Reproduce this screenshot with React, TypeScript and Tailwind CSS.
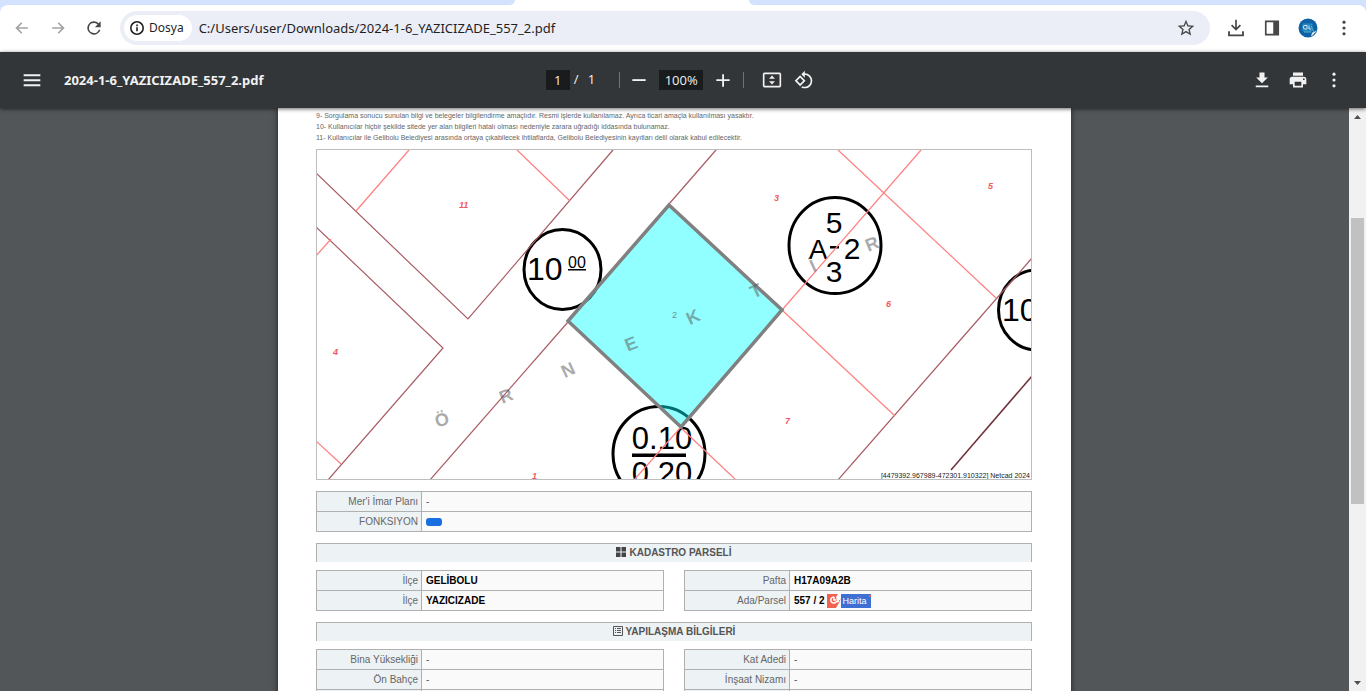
import React from "react";

const red = "#ff8080";
const maroon = "#a85c62";

const redLines = [
  "M409 150 356 211",
  "M517 150 570 201",
  "M331 239 316 256",
  "M316 441 341 464",
  "M838 150 996 298",
  "M921 150 782 310",
  "M782 310 895 416",
  "M681 428 736 480",
  "M681 427 634 480",
];

const maroonLines = [
  "M316 173 468 319 613 150",
  "M316 227 443 348 328 480",
  "M568 322 430 480",
  "M669 204 716 150",
  "M1032 258 838 480",
];

const parcels: [string, number, number][] = [
  ["11", 459, 208],
  ["3", 774, 201],
  ["5", 988, 189],
  ["6", 886, 307],
  ["7", 785, 424],
  ["4", 333, 355],
  ["1", 532, 479],
];

const watermark: [string, number, number, number][] = [
  ["Ö", 442, 420, -15],
  ["R", 506, 396, -22],
  ["N", 568, 370, -25],
  ["E", 631, 344, -22],
  ["K", 693, 317, -25],
  ["T", 756, 291, -25],
  ["İ", 813, 266, -25],
  ["R", 872, 244, -22],
];

function MapView() {
  return (
    <svg
      className="block w-full"
      viewBox="316 149 716 331"
      fontFamily="'Liberation Sans', Arial, sans-serif"
      role="img"
      aria-label="Parsel haritası"
    >
      <rect x="316" y="149" width="716" height="331" fill="#fff" />
      <g fill="none" stroke="#000" strokeWidth="3">
        <ellipse cx="562.500" cy="269.500" rx="38.500" ry="40" />
        <ellipse cx="835" cy="245.500" rx="46" ry="48" />
        <ellipse cx="659" cy="454" rx="46" ry="47.500" />
        <ellipse cx="1037" cy="310" rx="38.500" ry="40" />
      </g>
      <g fill="#000">
        <text x="527" y="280" fontSize="32">10</text>
        <text x="568" y="268" fontSize="16">00</text>
        <rect x="568" y="269" width="18" height="1.500" />
        <g textAnchor="middle" fontSize="30">
          <text x="834" y="233">5</text>
          <text x="818" y="259" fontSize="28">A</text>
          <text x="852" y="259">2</text>
          <text x="834" y="282">3</text>
        </g>
        <rect x="830" y="246" width="9" height="2.500" />
        <text x="662" y="449" fontSize="31" textAnchor="middle">0.10</text>
        <rect x="632" y="453.500" width="54" height="3.500" />
        <text x="662" y="484" fontSize="31" textAnchor="middle">0.20</text>
        <text x="1002" y="321" fontSize="32">10</text>
      </g>
      <path d="M669 205 782 310 681 427 568 321Z" fill="#00ffff" fillOpacity="0.43" />
      <g fill="none" strokeWidth="1.200">
        {maroonLines.map((d) => <path key={d} d={d} stroke={maroon} />)}
        {redLines.map((d) => <path key={d} d={d} stroke={red} />)}
        <path d="M1032 376 951 470" stroke="#6d3038" strokeWidth="1.500" />
      </g>
      <path d="M669 205 782 310 681 427 568 321Z" fill="none" stroke="#808080" strokeWidth="3.500" />
      <g fill="#ef5a62" fontSize="9" fontWeight="bold" fontStyle="italic">
        {parcels.map(([t, x, y]) => <text key={t} x={x} y={y}>{t}</text>)}
      </g>
      <text x="672" y="318" fontSize="9" fill="#6b8f90">2</text>
      <g fill="#555" fillOpacity="0.5" fontSize="18" fontWeight="bold" textAnchor="middle">
        {watermark.map(([t, x, y, a]) => (
          <text key={x} x={x} y={y + 6} transform={`rotate(${a} ${x} ${y})`}>{t}</text>
        ))}
      </g>
      <text x="1030" y="478" fontSize="7" fill="#222" textAnchor="end">[4479392.967989-472301.910322] Netcad 2024</text>
      <rect x="316.500" y="149.500" width="715" height="330" fill="none" stroke="#bdbdbd" />
    </svg>
  );
}

type Row = [string, React.ReactNode];

function InfoTable({ rows, className = "" }: { rows: Row[]; className?: string }) {
  return (
    <table className={`w-full table-fixed border-collapse text-[10px] leading-4 ${className}`}>
      <colgroup>
        <col className="w-[105px]" />
        <col />
      </colgroup>
      <tbody>
        {rows.map(([label, value], i) => (
          <tr key={i} className="h-5">
            <th scope="row" className="whitespace-nowrap border border-[#b0b0b0] bg-[#edf2f5] p-0 pr-[3px] text-right font-normal text-[#666]">{label}</th>
            <td className="whitespace-nowrap border border-[#b0b0b0] bg-[#fafafa] p-0 pl-1 text-[#555]">{value}</td>
          </tr>
        ))}
      </tbody>
    </table>
  );
}

function Heading({ icon, children }: { icon: React.ReactNode; children: React.ReactNode }) {
  return (
    <h2 className="mt-[11px] mb-2 flex h-[19px] items-center justify-center gap-[3px] border border-b-0 border-[#b0b0b0] bg-[#edf2f5] text-[10px] font-bold leading-4 text-[#555]">
      {icon}
      {children}
    </h2>
  );
}

const gridIcon = (
  <svg className="mb-[2px] size-[10px]" viewBox="0 0 10 10" fill="#444" aria-hidden="true">
    <path d="M0 0h4.500v4.500H0zM5.500 0H10v4.500H5.500zM0 5.500h4.500V10H0zM5.500 5.500H10V10H5.500z" />
  </svg>
);

const listIcon = (
  <svg className="mb-[2px] size-[10px]" viewBox="0 0 10 10" fill="none" stroke="#555" aria-hidden="true">
    <path d="M.5.5h9v9h-9zM2 2.500h1M4 2.500h4M2 4.500h1M4 4.500h4M2 6.500h1M4 6.500h4" />
  </svg>
);

const harita = (
  <span className="flex items-center font-bold text-black">
    557 / 2
    <svg className="ml-[2px] size-[14px]" viewBox="0 0 14 14" aria-hidden="true">
      <path d="M0 0h11l-2 3 1 5 4-3-5 9H0z" fill="#f2604f" />
      <path d="M7 3a3 3 0 1 0 2 5l3-1M7 3v3h2" fill="none" stroke="#fff" strokeWidth="1.500" />
    </svg>
    <a href="#harita" className="relative flex h-[14px] items-center bg-[#3e70d4] px-[2px] pr-1 text-[9px] font-normal text-white">
      Harita
      <span className="absolute top-px right-0 size-[2px] bg-[#f2604f]" />
    </a>
  </span>
);

function IconButton({ label, children, className = "" }: { label: string; children: React.ReactNode; className?: string }) {
  return (
    <button type="button" aria-label={label} className={`flex size-9 shrink-0 items-center justify-center ${className}`}>
      <svg className="size-5" viewBox="0 0 24 24" fill="currentColor" aria-hidden="true">{children}</svg>
    </button>
  );
}

const dots = (
  <>
    <circle cx="12" cy="5" r="1.900" />
    <circle cx="12" cy="12" r="1.900" />
    <circle cx="12" cy="19" r="1.900" />
  </>
);

function BrowserBar() {
  return (
    <header className="shrink-0 bg-[#d3e3fd]">
      <div className="flex h-[5px] bg-white">
        <div className="w-[515px] rounded-br-[5px] bg-[#d3e3fd]" />
        <div className="w-[234px]" />
        <div className="flex-1 rounded-bl-[5px] bg-[#d3e3fd]" />
      </div>
      <div className="flex h-[47px] items-center rounded-t-lg bg-white px-1 pb-px text-[#474747]">
        <IconButton label="Geri" className="text-[#a3a3a3]">
          <path d="M19 11H7.800l4.600-4.600L11 5l-7 7 7 7 1.400-1.400L7.800 13H19z" />
        </IconButton>
        <IconButton label="İleri" className="text-[#a3a3a3]">
          <path d="M5 11h11.200l-4.600-4.600L13 5l7 7-7 7-1.400-1.400 4.600-4.600H5z" />
        </IconButton>
        <IconButton label="Yenile">
          <path d="M17.650 6.350A8 8 0 1 0 19.730 14h-2.080A6 6 0 1 1 12 6c1.660 0 3.140.69 4.220 1.780L13 11h7V4z" />
        </IconButton>
        <div className="ml-2 flex h-[34px] flex-1 items-center rounded-full bg-[#ebedf7] pl-1">
          <button type="button" className="flex h-[26px] items-center gap-1 rounded-full bg-white pr-2 pl-[5px] font-['Noto_Sans','Open_Sans',sans-serif] text-xs text-[#1f1f1f]">
            <svg className="size-4" viewBox="0 0 16 16" fill="none" stroke="#1f1f1f" strokeWidth="1.600" aria-hidden="true">
              <circle cx="8" cy="8" r="6.200" />
              <path d="M8 7.200v4M8 4.600v1.600" />
            </svg>
            Dosya
          </button>
          <input
            aria-label="Adres"
            readOnly
            value="C:/Users/user/Downloads/2024-1-6_YAZICIZADE_557_2.pdf"
            className="ml-[7px] h-6 min-w-0 flex-1 bg-transparent font-['Noto_Sans','Open_Sans',sans-serif] text-[13px] text-[#1f1f1f] outline-none"
          />
          <IconButton label="Yer işareti ekle" className="mr-[6px]">
            <path d="m22 9.240-7.190-.62L12 2 9.190 8.630 2 9.240l5.460 4.730L5.820 21 12 17.270 18.180 21l-1.630-7.030zM12 15.400l-3.760 2.270 1-4.280-3.320-2.880 4.380-.38L12 6.100l1.710 4.040 4.380.38-3.320 2.880 1 4.280z" />
          </IconButton>
        </div>
        <div className="ml-2 flex">
          <IconButton label="İndirilenler">
            <path d="M11 2h2v9.500l3.600-3.600L18 9.300l-6 6-6-6 1.400-1.400L11 11.500zM2.500 16h2.200v3.800h14.600V16h2.200v6h-19z" />
          </IconButton>
          <IconButton label="Yan panel">
            <path d="M3.500 3h17v18h-17zm2 2v14h8V5z" fillRule="evenodd" />
          </IconButton>
          <button type="button" aria-label="Profil" className="flex size-9 items-center justify-center">
            <svg className="size-5" viewBox="0 0 20 20" aria-hidden="true">
              <circle cx="10" cy="10" r="9.500" fill="#0e61a6" />
              <path d="M5 6h9v7H5z" fill="#1679b9" stroke="#37a4c9" strokeWidth=".7" />
              <path d="M9 7.500H7a1.200 1.200 0 0 0 0 3.500h2zM11 7.500V11h2" fill="none" stroke="#d7e9f2" />
              <path d="m13 8 3 6M6 14h7" stroke="#56b7c9" />
              <path d="M19.200 12.500 13 18.800l1-4z" fill="#e7eff5" />
            </svg>
          </button>
          <IconButton label="Menü">{dots}</IconButton>
        </div>
      </div>
    </header>
  );
}

function PdfBar() {
  return (
    <div className="relative z-10 grid h-14 shrink-0 grid-cols-[1fr_auto_1fr] items-center bg-[#323639] font-['Open_Sans',sans-serif] text-[13px] text-[#f1f1f1] shadow-[0_1px_4px_rgba(0,0,0,0.6)]">
      <div className="flex items-center pl-[14px]">
        <IconButton label="Kenar çubuğu">
          <path d="M2 5h20v2.400H2zm0 6h20v2.400H2zm0 6h20v2.400H2z" />
        </IconButton>
        <h1 className="ml-[14px] pt-[2px] font-['Noto_Sans','Open_Sans',sans-serif] text-[13px] font-bold">2024-1-6_YAZICIZADE_557_2.pdf</h1>
      </div>
      <div className="flex items-center pl-[2px]">
        <input aria-label="Sayfa" defaultValue="1" className="h-5 w-6 bg-[#191b1c] text-center outline-none" />
        <span className="ml-1 w-[14px]">/</span>
        <span>1</span>
        <span className="ml-6 h-4 w-px bg-[#6f7274]" />
        <IconButton label="Uzaklaştır" className="mr-[2px] ml-px"><path d="M4 11h16v2.200H4z" /></IconButton>
        <input aria-label="Yakınlaştırma" defaultValue="100%" className="h-5 w-11 bg-[#191b1c] text-center outline-none" />
        <IconButton label="Yakınlaştır" className="ml-[2px]"><path d="M11 5h2.200v6H20v2.200h-6.800V20H11v-6.800H4V11h7z" /></IconButton>
        <span className="ml-[2px] h-4 w-px bg-[#6f7274]" />
        <IconButton label="Sayfaya sığdır" className="ml-[10px]">
          <path d="M3 3h18a2 2 0 0 1 2 2v14a2 2 0 0 1-2 2H3a2 2 0 0 1-2-2V5a2 2 0 0 1 2-2m0 2v14h18V5zm9 1.500 3.500 4h-7zm0 11-3.500-4h7z" fillRule="evenodd" />
        </IconButton>
        <IconButton label="Döndür" className="-ml-1">
          <path d="M7.340 6.410.86 12.900l6.490 6.480 6.490-6.480zM3.690 12.900l3.660-3.660L11 12.900l-3.660 3.660zM19.360 6.640A8.950 8.950 0 0 0 13 4V.76L8.760 5 13 9.240V6c1.790 0 3.580.68 4.950 2.050a7.007 7.007 0 0 1 0 9.900A6.970 6.970 0 0 1 13 20c-.97 0-1.940-.21-2.840-.61l-1.490 1.490A8.980 8.980 0 0 0 13 22c2.300 0 4.610-.88 6.360-2.640a8.980 8.980 0 0 0 0-12.720" />
        </IconButton>
      </div>
      <div className="flex justify-end pr-[14px]">
        <IconButton label="İndir"><path d="M19 9h-4V3H9v6H5l7 7zM4.500 18.500v2.200h15v-2.200z" /></IconButton>
        <IconButton label="Yazdır">
          <path d="M19 8H5a3 3 0 0 0-3 3v6h4v4h12v-4h4v-6a3 3 0 0 0-3-3m-3 11H8v-5h8zm3-7a1 1 0 1 1 0-2 1 1 0 0 1 0 2M18 3H6v4h12z" />
        </IconButton>
        <IconButton label="Diğer işlemler">{dots}</IconButton>
      </div>
    </div>
  );
}

export default function App() {
  return (
    <div className="flex h-screen flex-col overflow-hidden bg-[#525659]">
      <BrowserBar />
      <PdfBar />
      <div className="flex min-h-0 flex-1">
        <main className="flex flex-1 justify-center overflow-hidden">
          <article className="h-fit w-[793px] bg-white pt-[2px] pr-[39px] pl-[38px] font-['Liberation_Sans',Arial,sans-serif] shadow-[0_0_6px_rgba(0,0,0,0.6)]">
            <div className="mb-[6px] text-[7px] leading-[11px] text-[#666]">
              <p>9- Sorgulama sonucu sunulan bilgi ve belegeler bilgilendirme amaçlıdır. Resmi işlerde kullanılamaz. Ayrıca ticari amaçla kullanılması yasaktır.</p>
              <p>10- Kullanıcılar hiçbir şekilde sitede yer alan bilgileri hatalı olması nedeniyle zarara uğradığı iddasında bulunamaz.</p>
              <p>11- Kullanıcılar ile Gelibolu Belediyesi arasında ortaya çıkabilecek ihtilaflarda, Gelibolu Belediyesinin kayıtları delil olarak kabul edilecektir.</p>
            </div>
            <MapView />
            <InfoTable
              className="mt-[11px]"
              rows={[
                ["Mer'i İmar Planı", "-"],
                ["FONKSIYON", <span className="block h-2 w-4 rounded-[3px] bg-[#1a6fe0]" />],
              ]}
            />
            <Heading icon={gridIcon}>KADASTRO PARSELİ</Heading>
            <div className="grid grid-cols-2 gap-5">
              <InfoTable
                rows={[
                  ["İlçe", <b className="text-black">GELİBOLU</b>],
                  ["İlçe", <b className="text-black">YAZICIZADE</b>],
                ]}
              />
              <InfoTable
                rows={[
                  ["Pafta", <b className="text-black">H17A09A2B</b>],
                  ["Ada/Parsel", harita],
                ]}
              />
            </div>
            <Heading icon={listIcon}>YAPILAŞMA BİLGİLERİ</Heading>
            <div className="grid grid-cols-2 gap-5">
              <InfoTable rows={[["Bina Yüksekliği", "-"], ["Ön Bahçe", "-"], ["", ""]]} />
              <InfoTable rows={[["Kat Adedi", "-"], ["İnşaat Nizamı", "-"], ["", ""]]} />
            </div>
          </article>
        </main>
        <div className="flex w-[17px] shrink-0 flex-col items-center bg-[#f1f1f1]" aria-hidden="true">
          <svg className="h-[17px] w-[17px] shrink-0" viewBox="0 0 17 17" fill="#505050"><path d="M5 11h7L8.500 7z" /></svg>
          <div className="flex w-[13px] flex-1 flex-col">
            <div className="basis-[17%]" />
            <div className="basis-[52%] bg-[#c1c1c1]" />
          </div>
          <svg className="h-[17px] w-[17px] shrink-0" viewBox="0 0 17 17" fill="#505050"><path d="M5 7h7l-3.500 4z" /></svg>
        </div>
      </div>
    </div>
  );
}
